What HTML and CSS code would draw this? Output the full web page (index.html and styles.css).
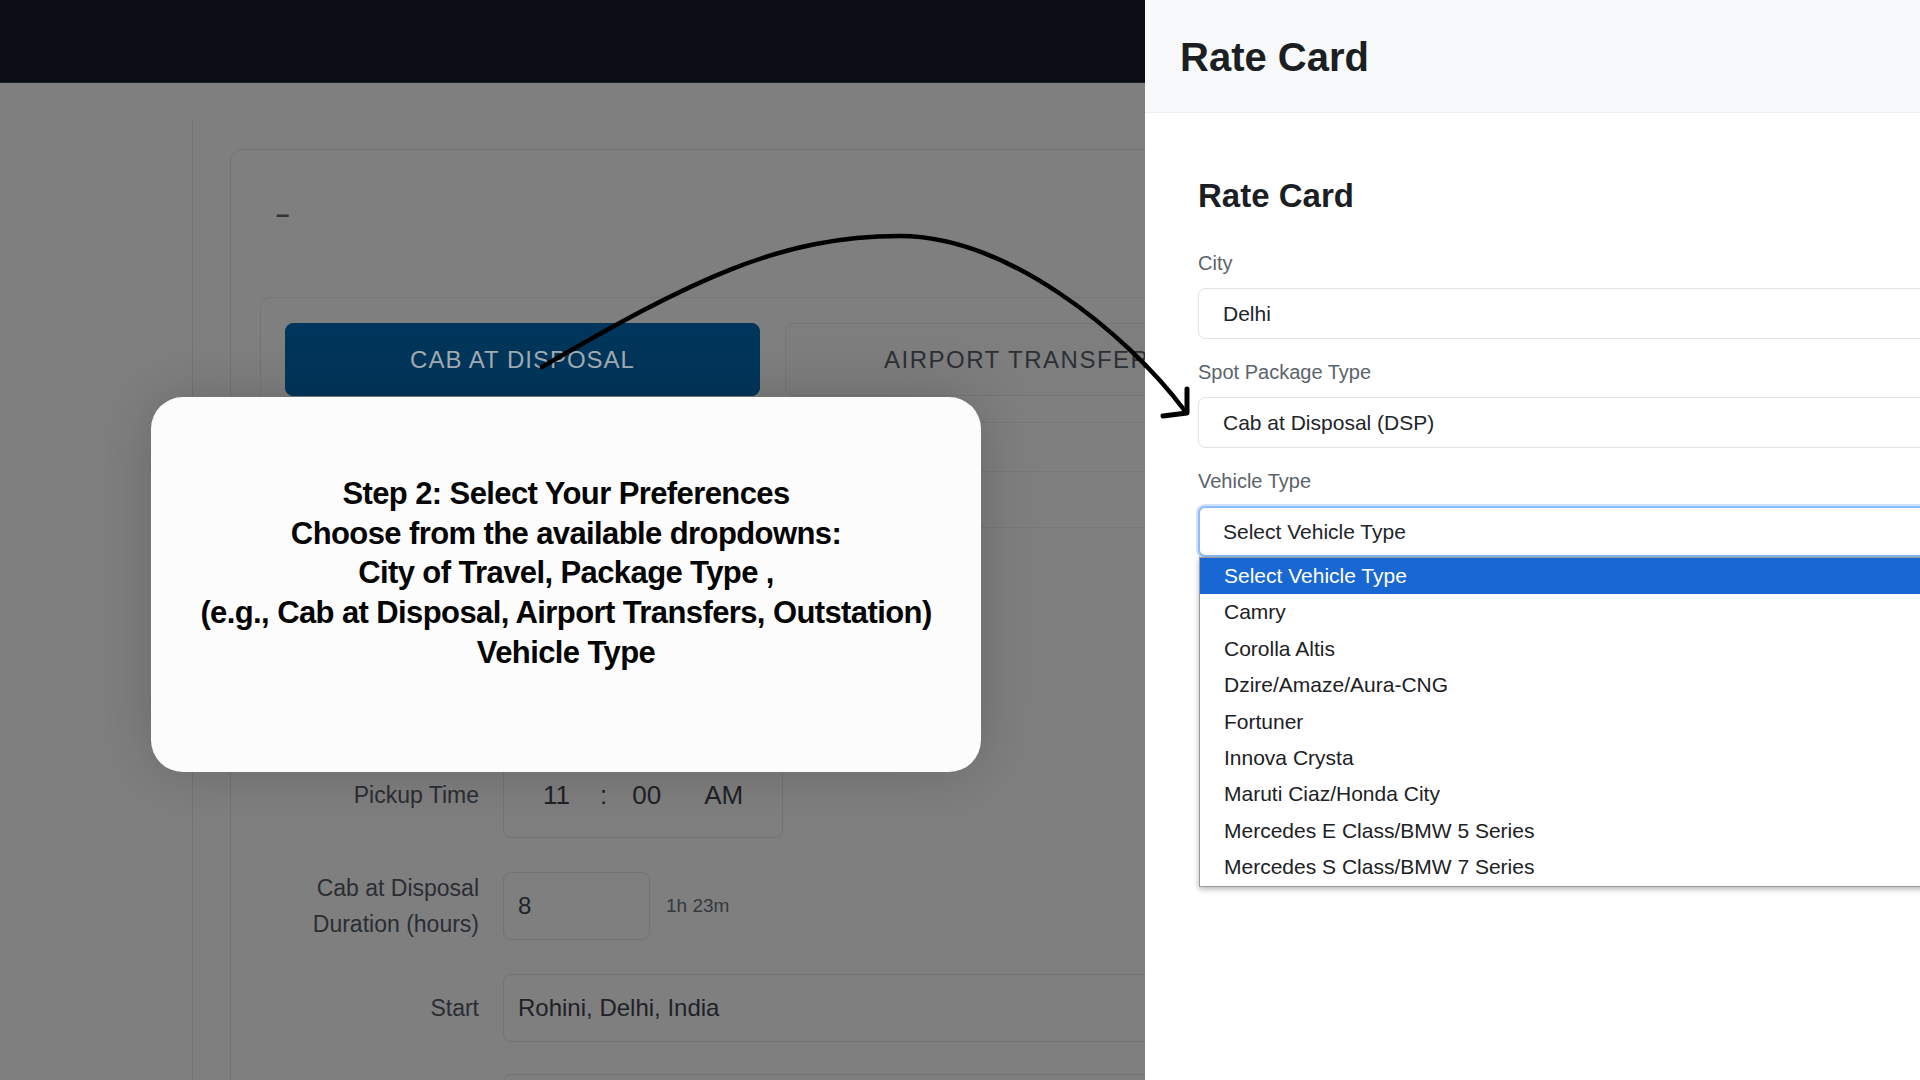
FILE: index.html
```html
<!DOCTYPE html>
<html lang="en">
<head>
<meta charset="utf-8">
<title>Rate Card</title>
<link rel="stylesheet" href="styles.css">
</head>
<body>
<div class="screen">
  <div class="app">
    <div class="topbar"></div>
    <div class="main">
      <div class="sidebar"></div>
      <div class="content">
        <div class="card">
          <div class="card-title">–</div>
          <div class="tabs">
            <div class="tab tab-active">CAB AT DISPOSAL</div>
            <div class="tab tab-alt">AIRPORT TRANSFER</div>
          </div>
          <div class="strip"></div>
          <div class="form">
            <div class="row">
              <div class="row-label">Pickup Date</div>
              <div class="box box-time"></div>
            </div>
            <div class="row">
              <div class="row-label">Pickup Time</div>
              <div class="box box-time box-tall">
                <span class="t-hh">11</span><span class="t-sep">:</span><span class="t-mm">00</span><span class="t-ap">AM</span>
              </div>
            </div>
            <div class="row">
              <div class="row-label">Cab at Disposal<br>Duration (hours)</div>
              <div class="row-inline">
                <div class="box box-small">8</div>
                <span class="hint">1h 23m</span>
              </div>
            </div>
            <div class="row">
              <div class="row-label">Start</div>
              <div class="box box-wide">Rohini, Delhi, India</div>
            </div>
            <div class="row">
              <div class="row-label"></div>
              <div class="box box-wide"></div>
            </div>
          </div>
        </div>
      </div>
    </div>
    <div class="popup">
      <p class="popup-text">Step 2: Select Your Preferences<br>Choose from the available dropdowns:<br>City of Travel, Package Type ,<br>(e.g., Cab at Disposal, Airport Transfers, Outstation)<br>Vehicle Type</p>
    </div>
  </div>

  <aside class="rate">
    <div class="rate-header">
      <h1 class="rate-title">Rate Card</h1>
    </div>
    <div class="rate-body">
      <h2 class="rate-subtitle">Rate Card</h2>
      <div class="field">
        <div class="field-label">City</div>
        <div class="input">Delhi</div>
      </div>
      <div class="field">
        <div class="field-label">Spot Package Type</div>
        <div class="input">Cab at Disposal (DSP)</div>
      </div>
      <div class="field">
        <div class="field-label">Vehicle Type</div>
        <div class="select-wrap">
          <div class="input input-focus">Select Vehicle Type</div>
          <ul class="options">
            <li class="option option-active">Select Vehicle Type</li>
            <li class="option">Camry</li>
            <li class="option">Corolla Altis</li>
            <li class="option">Dzire/Amaze/Aura-CNG</li>
            <li class="option">Fortuner</li>
            <li class="option">Innova Crysta</li>
            <li class="option">Maruti Ciaz/Honda City</li>
            <li class="option">Mercedes E Class/BMW 5 Series</li>
            <li class="option">Mercedes S Class/BMW 7 Series</li>
          </ul>
        </div>
      </div>
    </div>
  </aside>

  <svg class="arrow" width="1920" height="1080" viewBox="0 0 1920 1080">
    <path d="M542 367 C692 280 780 236 900 236 C1006 236 1125 331 1185 411" fill="none" stroke="#000" stroke-width="4.5" stroke-linecap="round"/>
    <path d="M1187 389 L1187 413 L1163 416" fill="none" stroke="#000" stroke-width="5" stroke-linecap="round" stroke-linejoin="round"/>
  </svg>
</div>
</body>
</html>
```

FILE: styles.css
```css
* { box-sizing: border-box; }

html, body {
  margin: 0;
  padding: 0;
  background: #7f7f7f;
}

body {
  font-family: "Liberation Sans", Arial, sans-serif;
}

.screen {
  position: relative;
  display: flex;
  width: 1920px;
  height: 1080px;
  overflow: hidden;
}

/* ---------- dimmed application ---------- */
.app {
  position: relative;
  flex: none;
  width: 1145px;
  height: 1080px;
  overflow: hidden;
  background: #7f7f7f;
}

.topbar {
  height: 83px;
  background: #0b0e14;
  border-bottom: 1px solid #1c2027;
}

.main {
  display: flex;
}

.sidebar {
  flex: none;
  width: 193px;
  height: 1000px;
  margin-top: 36px;
  border-right: 1px solid #737373;
}

.content {
  flex: none;
  width: 1500px;
  padding: 66px 0 0 37px;
}

.card {
  width: 1300px;
  height: 1000px;
  border: 1px solid #747474;
  border-radius: 12px;
  background: #7f7f7f;
}

.card-title {
  margin: 49px 0 0 45px;
  height: 30px;
  font-size: 24px;
  line-height: 30px;
  font-weight: 700;
  color: #30353a;
}

.tabs {
  display: flex;
  gap: 25px;
  margin: 68px 0 0 29px;
  padding: 25px 24px 26px;
  border: 1px solid #777;
  border-radius: 10px;
}

.tab {
  flex: none;
  width: 475px;
  height: 73px;
  display: flex;
  align-items: center;
  justify-content: center;
  border: 1px solid #767676;
  border-radius: 8px;
  font-size: 24px;
  letter-spacing: 1px;
  color: #2b3035;
  background: #7e7e7e;
  white-space: nowrap;
}

.tab-alt {
  justify-content: flex-start;
  padding-left: 98px;
  letter-spacing: 1.5px;
}

.tab-active {
  background: #00365b;
  border-color: #00365b;
  color: #a3acb4;
}

.strip {
  margin: 48px 0 0 29px;
  height: 57px;
  border-top: 1px solid #777;
  border-bottom: 1px solid #777;
}

.form {
  margin: 124px 0 0 29px;
}

.row {
  display: grid;
  grid-template-columns: 219px 1fr;
  column-gap: 24px;
  align-items: center;
  margin-bottom: 32px;
}

.row-label {
  text-align: right;
  font-size: 23px;
  line-height: 36px;
  color: #2a2e33;
}

.box {
  height: 68px;
  border: 1px solid #737373;
  border-radius: 8px;
  background: #7f7f7f;
  display: flex;
  align-items: center;
  padding-left: 14px;
  font-size: 24px;
  color: #1e2226;
}

.box-time {
  width: 280px;
  padding-left: 39px;
  font-size: 26px;
}

.box-tall {
  height: 86px;
}

.t-sep { margin-left: 30px; }
.t-mm { margin-left: 25px; }
.t-ap { margin-left: 43px; }

.row-inline {
  display: flex;
  align-items: center;
}

.box-small {
  width: 147px;
}

.hint {
  margin-left: 16px;
  font-size: 19px;
  color: #34393e;
}

.box-wide {
  width: 900px;
}

/* ---------- popup ---------- */
.popup {
  position: absolute;
  left: 151px;
  top: 397px;
  width: 830px;
  height: 375px;
  border-radius: 32px;
  background: #fcfcfc;
  box-shadow: 0 0 60px rgba(0, 0, 0, 0.18);
  padding-top: 77px;
}

.popup-text {
  margin: 0;
  text-align: center;
  font-family: "Liberation Sans", Arial, sans-serif;
  font-weight: 700;
  font-size: 31px;
  line-height: 39.7px;
  letter-spacing: -0.6px;
  color: #050505;
}

/* ---------- rate card panel ---------- */
.rate {
  position: relative;
  flex: none;
  width: 775px;
  height: 1080px;
  background: #ffffff;
  overflow: hidden;
}

.rate-header {
  height: 113px;
  background: #f8f9fa;
  border-bottom: 1px solid #eaecef;
  padding: 33px 0 0 35px;
}

.rate-title {
  margin: 0;
  font-size: 40px;
  line-height: 48px;
  font-weight: 700;
  color: #1b1f23;
}

.rate-body {
  padding: 63px 0 0 53px;
}

.rate-subtitle {
  margin: 0 0 35px;
  font-size: 33px;
  line-height: 40px;
  font-weight: 700;
  color: #1b1f23;
}

.field {
  margin-bottom: 21px;
}

.field-label {
  font-size: 20px;
  line-height: 24px;
  color: #5b636b;
  margin-bottom: 13px;
}

.input {
  width: 900px;
  height: 51px;
  display: flex;
  align-items: center;
  padding-left: 24px;
  border: 1px solid #dfe2e6;
  border-radius: 7px;
  font-size: 21px;
  color: #212529;
  background: #fff;
}

.input-focus {
  border: 2px solid #8bbcf8;
  padding-left: 23px;
  box-shadow: 0 0 0 2px rgba(120, 170, 245, 0.35);
}

.select-wrap {
  position: relative;
}

.options {
  position: absolute;
  left: 1px;
  top: 51px;
  width: 900px;
  margin: 0;
  padding: 0;
  list-style: none;
  background: #fff;
  border: 1px solid #9a9a9a;
  box-shadow: 0 2px 6px rgba(0, 0, 0, 0.3);
}

.option {
  height: 36.4px;
  line-height: 36.4px;
  padding-left: 24px;
  font-size: 21px;
  color: #202124;
}

.option-active {
  background: #1967d2;
  color: #ffffff;
}

/* ---------- annotation arrow ---------- */
.arrow {
  position: absolute;
  left: 0;
  top: 0;
  pointer-events: none;
}
```
